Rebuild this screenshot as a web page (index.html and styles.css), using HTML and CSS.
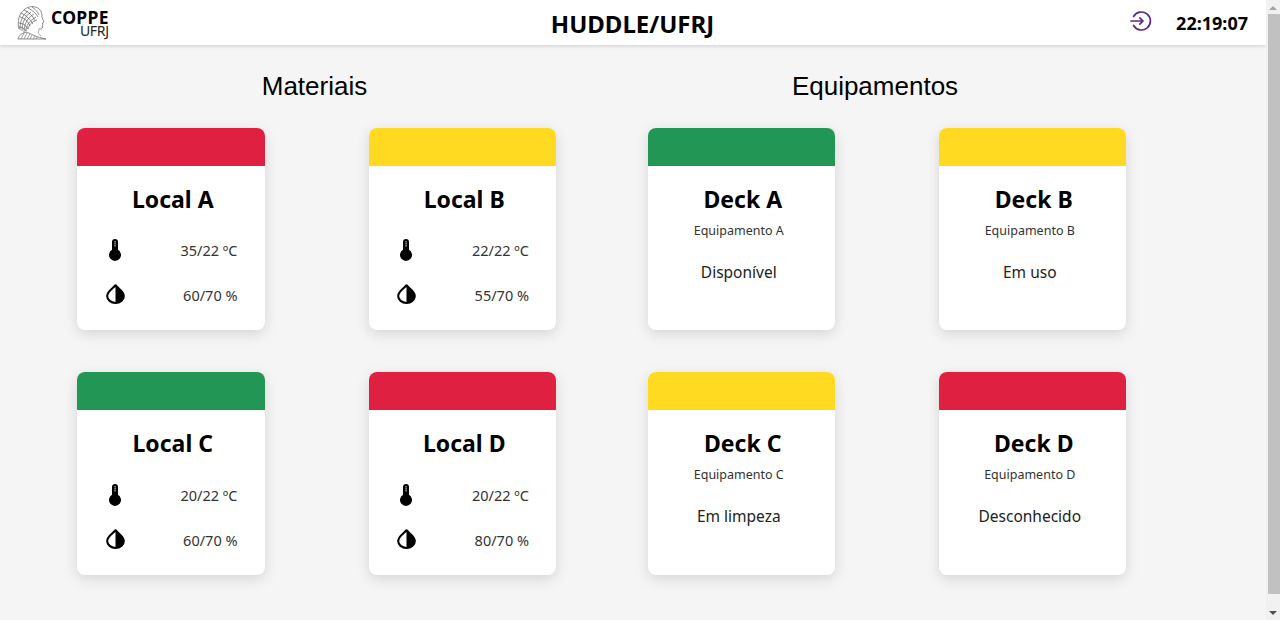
FILE: index.html
```html
<!DOCTYPE html>
<html lang="pt-BR">
<head>
    <meta charset="UTF-8">
    <meta name="viewport" content="width=device-width, initial-scale=1.0">
    <title>HUDDLE/UFRJ</title>
    <link rel="stylesheet" href="styles.css">
</head>
<body>
    <div class="window">
        <div class="page">
            <!-- topo -->
            <header class="topbar">
                <div class="logo">
                    <svg class="logo-head" width="31" height="36" viewBox="0 0 31 36" fill="none" stroke="#5c5c5c" stroke-width="0.7">
                        <!-- capacete -->
                        <path d="M2 24C0 16 2 8 8 4c4-3 9-3 13-1 3 2 4 5 4 8"/>
                        <path d="M3 25C3 17 5 10 11 6M5 26C5 18 8 11 14 7M7 27C7 20 10 13 17 9M9 26c0-5 3-10 10-14M11 24c1-4 3-7 9-9"/>
                        <path d="M3 12c4 1 8 4 10 9M4 8c5 2 9 6 12 11M7 5c5 2 9 6 11 11M11 3c4 2 8 5 10 9M15 2c3 2 6 5 7 8"/>
                        <path d="M2 18c3 0 7 2 9 6M2 22c2 0 5 1 7 4"/>
                        <!-- rosto -->
                        <path d="M25 11c0 2 1 4 2 6l-1.500 1 .5 2-1 1 .5 2c-1 1-2 1-3.500 1"/>
                        <path d="M22 24c-1 3-1 5 2 7" stroke="#8a8a8a"/>
                        <!-- ombros -->
                        <path d="M1 34c1-4 4-6 8-7 3 1 5 2 7 3 4 2 9 3 13 4z"/>
                        <path d="M4 34l3-6M7 34l3-6M10 34l3-5M13 34l2-4M16 34l2-3M19 34l1-2" stroke="#777777"/>
                    </svg>
                    <div class="logo-text">
                        <span class="logo-coppe">COPPE</span>
                        <span class="logo-ufrj">UFRJ</span>
                    </div>
                </div>
                <h1 class="app-title">HUDDLE/UFRJ</h1>
                <div class="topbar-right">
                    <svg width="22" height="22" viewBox="0 0 22 22" fill="none" stroke="#5b2a91" stroke-width="1.7" stroke-linecap="round" stroke-linejoin="round">
                        <path d="M3.600 6.500A9 9 0 1 1 3.600 15.500"/>
                        <path d="M1 11h12M9.800 7.800 13 11l-3.200 3.200"/>
                    </svg>
                    <span class="clock">22:19:07</span>
                </div>
            </header>

            <main class="content">
                <section class="group group-materiais">
                    <h2 class="group-title">Materiais</h2>
                    <div class="cards">
                        <div class="card">
                            <div class="card-band red"></div>
                            <div class="card-body">
                                <div class="card-name">Local A</div>
                                <div class="reading"><svg class="icon-temp"><use href="#temp"/></svg><span>35/22 ºC</span></div>
                                <div class="reading"><svg class="icon-drop"><use href="#drop"/></svg><span>60/70 %</span></div>
                            </div>
                        </div>
                        <div class="card">
                            <div class="card-band yellow"></div>
                            <div class="card-body">
                                <div class="card-name">Local B</div>
                                <div class="reading"><svg class="icon-temp"><use href="#temp"/></svg><span>22/22 ºC</span></div>
                                <div class="reading"><svg class="icon-drop"><use href="#drop"/></svg><span>55/70 %</span></div>
                            </div>
                        </div>
                        <div class="card">
                            <div class="card-band green"></div>
                            <div class="card-body">
                                <div class="card-name">Local C</div>
                                <div class="reading"><svg class="icon-temp"><use href="#temp"/></svg><span>20/22 ºC</span></div>
                                <div class="reading"><svg class="icon-drop"><use href="#drop"/></svg><span>60/70 %</span></div>
                            </div>
                        </div>
                        <div class="card">
                            <div class="card-band red"></div>
                            <div class="card-body">
                                <div class="card-name">Local D</div>
                                <div class="reading"><svg class="icon-temp"><use href="#temp"/></svg><span>20/22 ºC</span></div>
                                <div class="reading"><svg class="icon-drop"><use href="#drop"/></svg><span>80/70 %</span></div>
                            </div>
                        </div>
                    </div>
                </section>

                <section class="group group-equipamentos">
                    <h2 class="group-title">Equipamentos</h2>
                    <div class="cards">
                        <div class="card">
                            <div class="card-band green"></div>
                            <div class="card-body">
                                <div class="card-name">Deck A</div>
                                <div class="card-sub">Equipamento A</div>
                                <div class="card-status">Disponível</div>
                            </div>
                        </div>
                        <div class="card">
                            <div class="card-band yellow"></div>
                            <div class="card-body">
                                <div class="card-name">Deck B</div>
                                <div class="card-sub">Equipamento B</div>
                                <div class="card-status">Em uso</div>
                            </div>
                        </div>
                        <div class="card">
                            <div class="card-band yellow"></div>
                            <div class="card-body">
                                <div class="card-name">Deck C</div>
                                <div class="card-sub">Equipamento C</div>
                                <div class="card-status">Em limpeza</div>
                            </div>
                        </div>
                        <div class="card">
                            <div class="card-band red"></div>
                            <div class="card-body">
                                <div class="card-name">Deck D</div>
                                <div class="card-sub">Equipamento D</div>
                                <div class="card-status">Desconhecido</div>
                            </div>
                        </div>
                    </div>
                </section>
            </main>
        </div>

        <!-- barra de rolagem -->
        <div class="scrollbar">
            <span class="arrow-up"></span>
            <span class="thumb"></span>
            <span class="arrow-down"></span>
        </div>
    </div>

    <svg width="0" height="0" class="icon-defs">
        <symbol id="temp" viewBox="0 0 14 22">
            <path d="M4 3a3 3 0 0 1 6 0v7.800a6 6 0 1 1-6 0z" fill="#000"/>
            <path d="M6.200 2.500h1.800v.8h-1.800zM6.200 4.500h1.800v.8h-1.800zM6.200 6.500h1.800v.8h-1.800z" fill="#fff"/>
        </symbol>
        <symbol id="drop" viewBox="0 0 18 19">
            <path d="M9 1.200C7 3.800 1.100 6.800 1.100 11.400a7.900 6.600 0 0 0 15.800 0C16.900 6.800 11 3.800 9 1.200z" fill="#fff" stroke="#000" stroke-width="2" stroke-linejoin="round"/>
            <path d="M9 1.200c2 2.600 7.900 5.600 7.900 10.200a7.900 6.600 0 0 1-7.900 6.600z" fill="#000"/>
        </symbol>
    </svg>
</body>
</html>
```

FILE: styles.css
```css
* {
    box-sizing: border-box;
}

html,
body {
    height: 100%;
    margin: 0;
    overflow: hidden;
}

body {
    font-family: "Noto Sans", "Open Sans", sans-serif;
    background-color: #f5f5f5;
    color: #000000;
}

.window {
    display: flex;
    height: 620px;
}

.page {
    flex: 1;
    min-width: 0;
}

.icon-defs {
    display: block;
}

/* topo */
.topbar {
    display: grid;
    grid-template-columns: 1fr auto 1fr;
    align-items: center;
    height: 45px;
    padding: 0 18px 0 17px;
    background: #ffffff;
    box-shadow: 0 1px 4px rgba(0, 0, 0, 0.16);
}

.logo {
    display: flex;
    align-items: center;
    gap: 3px;
}

.logo-head {
    margin-top: 1px;
}

.logo-text {
    display: flex;
    flex-direction: column;
    align-items: flex-end;
    margin-top: 2px;
}

.logo-coppe {
    font-size: 17.500px;
    font-weight: 700;
    letter-spacing: 0.3px;
    line-height: 14px;
}

.logo-ufrj {
    font-size: 14px;
    line-height: 13px;
    color: #222222;
    letter-spacing: -0.3px;
}

.app-title {
    margin: 2px 0 0;
    font-size: 24px;
    font-weight: 700;
}

.topbar-right {
    display: flex;
    justify-content: flex-end;
    align-items: center;
    gap: 24px;
}

.topbar-right svg {
    margin-top: -4px;
}

.clock {
    font-size: 18px;
    font-weight: 700;
}

/* grupos */
.content {
    display: flex;
    padding: 0 0 0 77px;
}

.group {
    width: 570.500px;
}

.group-title {
    margin: 0;
    height: 82.750px;
    padding-top: 26px;
    font-family: "Liberation Sans", Arial, sans-serif;
    font-size: 26px;
    font-weight: 400;
    line-height: 30px;
    text-align: center;
}

.group-materiais .group-title {
    width: 475px;
}

.group-equipamentos .group-title {
    width: 455px;
}

.cards {
    display: grid;
    grid-template-columns: 187.500px 187.500px;
    grid-auto-rows: 202.500px;
    column-gap: 104px;
    row-gap: 41.750px;
}

.group-equipamentos .cards {
    column-gap: 103.500px;
}

/* cartao */
.card {
    background: #ffffff;
    border-radius: 8px;
    overflow: hidden;
    box-shadow: 0 4px 14px rgba(0, 0, 0, 0.13);
}

.card-band {
    height: 38px;
}

.red {
    background-color: #e02040;
}

.yellow {
    background-color: #ffda20;
}

.green {
    background-color: #229654;
}

.card-body {
    padding: 16px 29px 0 0;
}

.card-name {
    padding-left: 33px;
    font-size: 23px;
    font-weight: 700;
    line-height: 34px;
    text-align: center;
}

.group-equipamentos .card-name {
    padding-left: 32px;
}

.reading {
    display: flex;
    justify-content: space-between;
    align-items: center;
    height: 45px;
    margin-right: -2px;
    padding-left: 27px;
    font-size: 14.500px;
    color: #333333;
}

.card-name + .reading {
    margin-top: 12px;
}

.icon-temp {
    width: 14px;
    height: 22px;
    margin-left: 3.500px;
}

.icon-drop {
    width: 19px;
    height: 20px;
    margin-left: 1.500px;
    margin-bottom: 2px;
}

.card-sub {
    margin-top: 5px;
    padding-left: 24px;
    font-size: 12.500px;
    line-height: 20px;
    color: #333333;
    text-align: center;
}

.card-status {
    margin-top: 19px;
    padding-left: 24px;
    font-size: 15.500px;
    line-height: 24px;
    color: #222222;
    text-align: center;
}

/* barra de rolagem */
.scrollbar {
    display: flex;
    flex-direction: column;
    align-items: center;
    width: 14px;
    background-color: #f1f1f1;
}

.thumb {
    flex: 1;
    width: 12px;
    margin-left: 1px;
    background-color: #c1c1c1;
}

.arrow-up,
.arrow-down {
    flex: none;
    width: 0;
    height: 0;
    border-left: 4px solid transparent;
    border-right: 4px solid transparent;
}

.arrow-up {
    margin: 6px 0 4px;
    border-bottom: 4px solid #a3a3a3;
}

.arrow-down {
    margin: 17px 0 5px;
    border-top: 4px solid #505050;
}
```
